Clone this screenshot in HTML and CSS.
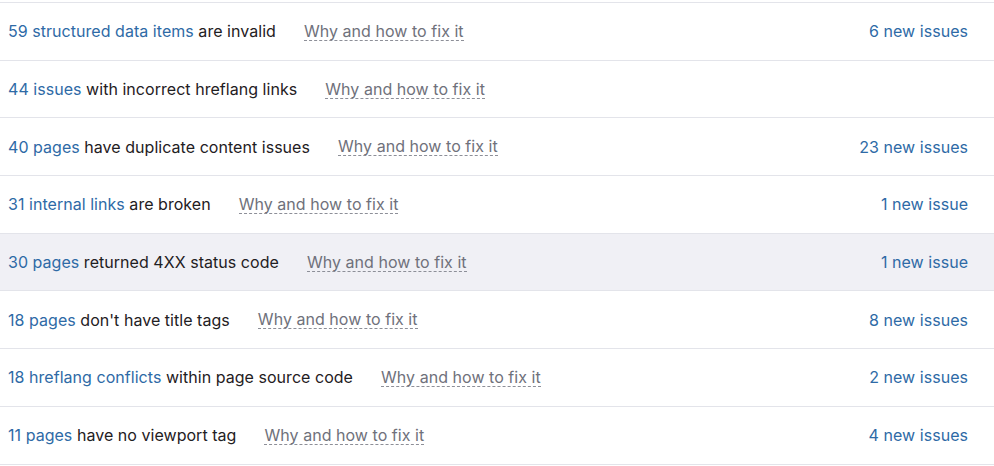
FILE: index.html
```html
<!DOCTYPE html>
<html>
<head>
<meta charset="utf-8">
<link rel="stylesheet" href="styles.css">
</head>
<body>
<div class="list">
  <div class="row"><div class="main"><span class="desc"><a class="link">59 structured data items</a> are invalid</span><span class="why">Why and how to fix it</span></div><a class="new">6 new issues</a></div>
  <div class="row"><div class="main"><span class="desc"><a class="link">44 issues</a> with incorrect hreflang links</span><span class="why">Why and how to fix it</span></div></div>
  <div class="row"><div class="main"><span class="desc"><a class="link">40 pages</a> have duplicate content issues</span><span class="why">Why and how to fix it</span></div><a class="new">23 new issues</a></div>
  <div class="row"><div class="main"><span class="desc"><a class="link">31 internal links</a> are broken</span><span class="why">Why and how to fix it</span></div><a class="new">1 new issue</a></div>
  <div class="row hover"><div class="main"><span class="desc"><a class="link">30 pages</a> returned 4XX status code</span><span class="why">Why and how to fix it</span></div><a class="new">1 new issue</a></div>
  <div class="row"><div class="main"><span class="desc"><a class="link">18 pages</a> don't have title tags</span><span class="why">Why and how to fix it</span></div><a class="new">8 new issues</a></div>
  <div class="row"><div class="main"><span class="desc"><a class="link">18 hreflang conflicts</a> within page source code</span><span class="why">Why and how to fix it</span></div><a class="new">2 new issues</a></div>
  <div class="row"><div class="main"><span class="desc"><a class="link">11 pages</a> have no viewport tag</span><span class="why">Why and how to fix it</span></div><a class="new">4 new issues</a></div>
</div>
</body>
</html>
```
FILE: styles.css
```css
html, body {
  margin: 0;
  padding: 0;
  background: #ffffff;
}
body {
  font-family: Inter, "Noto Sans", Arial, sans-serif;
  font-size: 16px;
  letter-spacing: 0.04px;
  color: #1f2023;
  padding-top: 2px;
}
.list {
  border-top: 1px solid #e3e4ea;
}
.row {
  display: flex;
  align-items: center;
  justify-content: space-between;
  height: 56.7px;
  border-bottom: 1px solid #e3e4ea;
  padding: 0 26px 0 8px;
}
.row.hover {
  background: #f0f0f5;
}
.main {
  display: flex;
  align-items: center;
  gap: 28px;
}
.link, .new {
  color: #2e6aa6;
  text-decoration: none;
}
.why {
  color: #6f717b;
  border-bottom: 1px dashed #8d8f98;
  line-height: 18px;
}
```
